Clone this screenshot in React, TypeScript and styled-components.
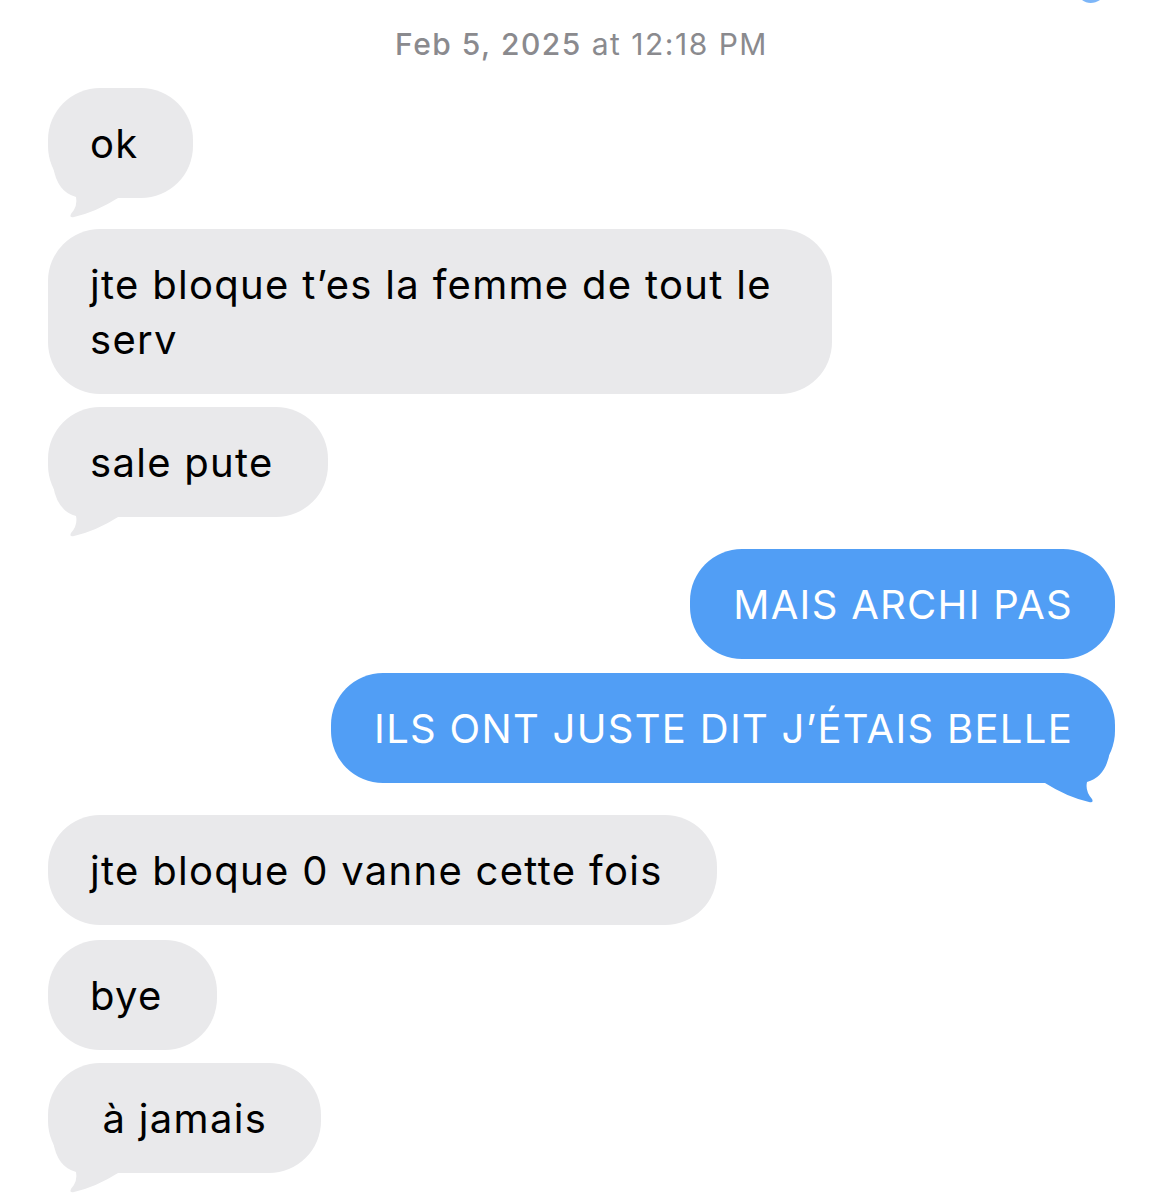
import React, {FC} from 'react';
import styled, {createGlobalStyle} from "styled-components";

const GREY = '#e9e9eb';
const BLUE = '#519ef5';

type Msg = {
    text: string,
    sent?: boolean,
    tail?: boolean,
    gap: number
}

const messages: Msg[] = [
    {text: 'ok', tail: true, gap: 0},
    {text: 'jte bloque t’es la femme de tout le serv', gap: 31},
    {text: 'sale pute', tail: true, gap: 13},
    {text: 'MAIS ARCHI PAS', sent: true, gap: 32},
    {text: 'ILS ONT JUSTE DIT J’ÉTAIS BELLE', sent: true, tail: true, gap: 14},
    {text: 'jte bloque 0 vanne cette fois', gap: 32},
    {text: 'bye', gap: 15},
    {text: '\u00a0à jamais', tail: true, gap: 13},
]

// bubble tail, drawn for the left side and mirrored for sent bubbles
const Tail: FC<{ sent?: boolean }> = ({sent}) => (
    <TailSvg $sent={sent} viewBox="0 0 72 58" width={72} height={58}>
        <path d="M5 4 Q9 30 28 35 Q30 44 23 52 Q21 56 26 55 Q48 50 70 36 L70 4 Z"
              fill={sent ? BLUE : GREY}/>
    </TailSvg>
)

const App: FC = () => {
    return (<>
            <GlobalStyle/>
            <Page>
                <CutOff viewBox="0 0 18 6" width={18} height={6}>
                    <path d="M0 0 C5 4 12 4 18 0 Z" fill={BLUE} opacity={0.75}/>
                </CutOff>
                <Stamp><b>Feb 5, 2025</b> at 12:18 PM</Stamp>
                <Thread>
                    {messages.map((m, i) =>
                        <Bubble key={i} $sent={m.sent} $gap={m.gap}>
                            {m.text}
                            {m.tail && <Tail sent={m.sent}/>}
                        </Bubble>
                    )}
                </Thread>
            </Page>
        </>
    );
};

export default App;

const GlobalStyle = createGlobalStyle`
  body {
    margin: 0;
    background: #ffffff;
    font-family: Inter, "Noto Sans", sans-serif;
  }
`

const Page = styled.div`
  position: relative;
  width: 1164px;
  height: 1200px;
  overflow: hidden;
  background: #fff;
  padding: 27px 49px 0 48px;
  box-sizing: border-box;
`

const CutOff = styled.svg`
  position: absolute;
  top: 0;
  right: 64px;
`

const Stamp = styled.div`
  text-align: center;
  font-size: 30px;
  line-height: 34px;
  color: #8a8a8e;
  letter-spacing: 1.5px;

  b {
    font-weight: 500;
  }
`

const Thread = styled.div`
  display: flex;
  flex-direction: column;
  align-items: flex-start;
  margin-top: 27px;
`

const Bubble = styled.div<{ $sent?: boolean, $gap: number }>`
  position: relative;
  align-self: ${p => p.$sent ? 'flex-end' : 'flex-start'};
  margin-top: ${p => p.$gap}px;
  max-width: 784px;
  box-sizing: border-box;
  padding: ${p => p.$sent ? '28px 42px 27px 43px' : '28px 54px 27px 42px'};
  border-radius: 52px;
  font-size: 40px;
  line-height: 55px;
  letter-spacing: 1.3px;
  background: ${p => p.$sent ? BLUE : GREY};
  color: ${p => p.$sent ? '#fff' : '#000'};
`

const TailSvg = styled.svg<{ $sent?: boolean }>`
  position: absolute;
  bottom: -22px;
  ${p => p.$sent ? 'right: 0; transform: scaleX(-1);' : 'left: 0;'}
`
